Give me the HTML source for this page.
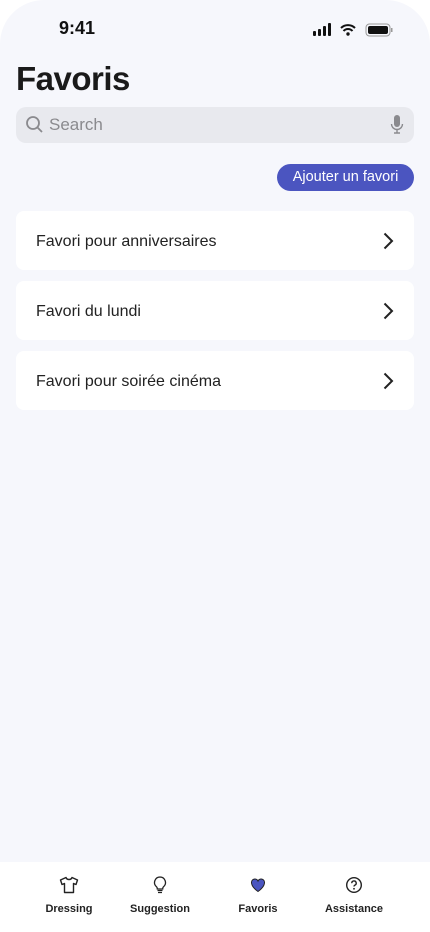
<!DOCTYPE html>
<html><head><meta charset="utf-8"><style>
*{margin:0;padding:0;box-sizing:border-box}
body{width:430px;height:932px;background:#fff;font-family:"Liberation Sans",sans-serif;overflow:hidden}
.ph{position:absolute;left:0;top:0;width:430px;height:932px;background:#f6f7fc;border-radius:44px 44px 0 0;overflow:hidden}
.time{position:absolute;left:59px;top:18px;font-size:18px;font-weight:bold;color:#111}
h1{position:absolute;left:16px;top:60px;font-size:33px;font-weight:bold;color:#1a1a1a;letter-spacing:-0.5px}
.search{position:absolute;left:16px;top:107px;width:398px;height:36px;background:#e8e9ee;border-radius:10px}
.search span{position:absolute;left:33px;top:8px;font-size:17px;color:#8a8a8e}
.btn{position:absolute;left:277px;top:164px;width:137px;height:27px;background:#4b55c0;border-radius:14px;color:#fff;font-size:14.5px;text-align:center;line-height:27px}
.card{position:absolute;left:16px;width:398px;height:59px;background:#fff;border-radius:8px}
.card span{position:absolute;left:20px;top:22px;font-size:16px;color:#222}
.card svg{position:absolute;right:20px;top:21px}
.tab{position:absolute;top:862px;left:0;width:430px;height:70px;background:#fff}
.ti{position:absolute;top:0;text-align:center;font-size:11px;font-weight:bold;color:#222;width:90px}
.ti svg{display:block;margin:14px auto 9px}
</style></head><body><div class="ph">
<div class="time">9:41</div>
<svg style="position:absolute;left:313px;top:23px" width="80" height="14">
<rect x="0" y="8" width="3" height="5" rx="1" fill="#111"/><rect x="5" y="6" width="3" height="7" rx="1" fill="#111"/><rect x="10" y="3" width="3" height="10" rx="1" fill="#111"/><rect x="15" y="0" width="3" height="13" rx="1" fill="#111"/>
<path d="M28 5a10 10 0 0 1 14 0M30.5 8a6 6 0 0 1 9 0" stroke="#111" stroke-width="2" fill="none"/><circle cx="35" cy="11" r="1.7" fill="#111"/>
<rect x="53" y="1" width="24" height="12" rx="3.5" fill="none" stroke="#999"/><rect x="55" y="3" width="20" height="8" rx="2" fill="#111"/><rect x="78" y="5" width="1.5" height="4" fill="#999"/>
</svg>
<h1>Favoris</h1>
<div class="search"><svg style="position:absolute;left:9px;top:8px" width="20" height="20"><circle cx="8" cy="8" r="6" stroke="#8a8a8e" stroke-width="1.8" fill="none"/><path d="M12.5 12.5l4.5 4.5" stroke="#8a8a8e" stroke-width="1.8"/></svg><span>Search</span>
<svg style="position:absolute;left:374px;top:8px" width="14" height="20"><rect x="4" y="0" width="6" height="12" rx="3" fill="#8a8a8e"/><path d="M1.5 9a5.5 5.5 0 0 0 11 0M7 14.5v3M4 18h6" stroke="#8a8a8e" stroke-width="1.4" fill="none"/></svg></div>
<div class="btn">Ajouter un favori</div>
<div class="card" style="top:211px"><span>Favori pour anniversaires</span><svg width="11" height="18"><path d="M1.5 1.5l7.5 7.5-7.5 7.5" stroke="#222" stroke-width="2" fill="none"/></svg></div>
<div class="card" style="top:281px"><span>Favori du lundi</span><svg width="11" height="18"><path d="M1.5 1.5l7.5 7.5-7.5 7.5" stroke="#222" stroke-width="2" fill="none"/></svg></div>
<div class="card" style="top:351px"><span>Favori pour soirée cinéma</span><svg width="11" height="18"><path d="M1.5 1.5l7.5 7.5-7.5 7.5" stroke="#222" stroke-width="2" fill="none"/></svg></div>
<div class="tab">
<div class="ti" style="left:24px"><svg width="20" height="18"><path d="M7 1.5L1.5 4l1.5 4.5 2.5-1V16.5h9V7.5l2.5 1L18.5 4 13 1.5c-.5 1.5-1.5 2-3 2s-2.5-.5-3-2z" stroke="#222" stroke-width="1.4" fill="none" stroke-linejoin="round"/></svg>Dressing</div>
<div class="ti" style="left:115px"><svg width="14" height="18"><path d="M7 1a5.5 5.5 0 0 0-3.5 9.7c.7.7.8 1.6.8 2.3h5.4c0-.7.1-1.6.8-2.3A5.5 5.5 0 0 0 7 1z" stroke="#222" stroke-width="1.3" fill="none"/><path d="M4.5 14.5h5M5 16.5h4" stroke="#222" stroke-width="1.3"/></svg>Suggestion</div>
<div class="ti" style="left:213px"><svg width="18" height="18"><path d="M9 15.5S2.5 11.2 2.5 6.6A3.4 3.4 0 0 1 9 5a3.4 3.4 0 0 1 6.5 1.6C15.5 11.2 9 15.5 9 15.5z" fill="#4b55c0" stroke="#222" stroke-width="1"/></svg>Favoris</div>
<div class="ti" style="left:309px"><svg width="18" height="18"><circle cx="9" cy="9" r="7.3" stroke="#222" stroke-width="1.4" fill="none"/><path d="M6.8 7.2a2.2 2.2 0 1 1 3 2c-.6.3-.8.7-.8 1.3" stroke="#222" stroke-width="1.4" fill="none"/><circle cx="9" cy="12.8" r=".9" fill="#222"/></svg>Assistance</div>
</div>
</div></body></html>
